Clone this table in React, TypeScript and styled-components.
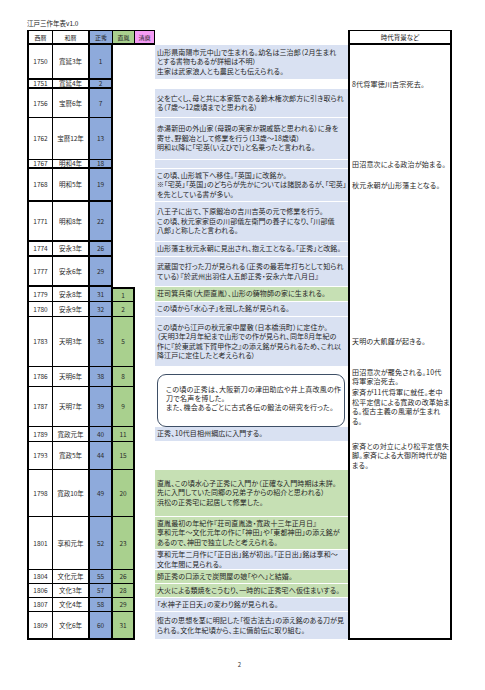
import { FC } from 'react';
import styled, { createGlobalStyle } from 'styled-components';

type Tone = 'blue' | 'green' | 'none';

interface Block {
  tone: Tone;
  lines: string[];
  h?: number;
}

interface Row {
  year: string;
  era: string;
  masa: string;
  nao?: string;
  h: number;
  thick?: boolean;
  events?: Block[];
  box?: string[];
  covered?: boolean;
  note?: string[];
}

const FILL = {
  blue: '#d9e1f2',
  green: '#c6e0b4',
  none: 'transparent',
};

const blue = (...lines: string[]): Block => ({ tone: 'blue', lines });
const green = (...lines: string[]): Block => ({ tone: 'green', lines });

const rows: Row[] = [
  {
    year: '1750', era: '寛延3年', masa: '1', h: 35, thick: true,
    events: [blue('山形県南陽市元中山で生まれる。幼名は三治郎（2月生まれ', 'とする書物もあるが詳細は不明）', '生家は武家浪人とも農民とも伝えられる。')],
  },
  { year: '1751', era: '寛延4年', masa: '2', h: 9, thick: true, note: ['8代将軍徳川吉宗死去。'] },
  {
    year: '1756', era: '宝暦6年', masa: '7', h: 29,
    events: [blue('父を亡くし、母と共に本家筋である鈴木権次郎方に引き取られ', 'る（7歳～12歳頃までと思われる）')],
  },
  {
    year: '1762', era: '宝暦12年', masa: '13', h: 42,
    events: [blue('赤湯新田の外山家（母親の実家か親戚筋と思われる）に身を', '寄せ、野鍛冶として修業を行う（13歳～18歳頃）', '明和以降に「宅英(いえひで)」と名乗ったと言われる。')],
  },
  { year: '1767', era: '明和4年', masa: '18', h: 9, thick: true, events: [blue()], note: ['田沼意次による政治が始まる。'] },
  {
    year: '1768', era: '明和5年', masa: '19', h: 33, thick: true,
    events: [blue('この頃、山形城下へ移住。「英国」に改銘か。', '※「宅英」「英国」のどちらが先かについては諸説あるが、「宅英」', 'を先としている書が多い。')],
    note: ['秋元永朝が山形藩主となる。'],
  },
  {
    year: '1771', era: '明和8年', masa: '22', h: 40, thick: true,
    events: [blue('八王子に出て、下原鍛冶の吉川吉英の元で修業を行う。', 'この頃、秋元家家臣の川部儀左衛門の養子になり、「川部儀', '八郎」と称したと言われる。')],
  },
  {
    year: '1774', era: '安永3年', masa: '26', h: 15, thick: true,
    events: [blue('山形藩主秋元永朝に見出され、抱え工となる。「正秀」と改銘。')],
  },
  {
    year: '1777', era: '安永6年', masa: '29', h: 30, thick: true,
    events: [blue('武蔵国で打った刀が見られる（正秀の最若年打ちとして知られ', 'ている）『於武州出羽住人五郎正秀・安永六年八月日』')],
  },
  {
    year: '1779', era: '安永8年', masa: '31', nao: '1', h: 15,
    events: [green('荘司箕兵衛（大慶直胤）、山形の鋳物師の家に生まれる。')],
  },
  {
    year: '1780', era: '安永9年', masa: '32', nao: '2', h: 15,
    events: [blue('この頃から「水心子」を冠した銘が見られる。')],
  },
  {
    year: '1783', era: '天明3年', masa: '35', nao: '5', h: 50,
    events: [blue('この頃から江戸の秋元家中屋敷（日本橋浜町）に定住か。', '（天明3年2月年紀まで山形での作が見られ、同年8月年紀の', '作に『於東武城下賀甲作之』の添え銘が見られるため、これ以', '降江戸に定住したと考えられる）')],
    note: ['天明の大飢饉が起きる。'],
  },
  {
    year: '1786', era: '天明6年', masa: '38', nao: '8', h: 20,
    box: ['この頃の正秀は、大阪新刀の津田助広や井上真改風の作', '刀で名声を博した。', 'また、機会あるごとに古式各伝の鍛法の研究を行った。'],
    note: ['田沼意次が罷免される。10代', '将軍家治死去。'],
  },
  {
    year: '1787', era: '天明7年', masa: '39', nao: '9', h: 40, covered: true,
    note: ['家斉が11代将軍に就任。老中', '松平定信による寛政の改革始ま', 'る。復古主義の風潮が生まれ', 'る。'],
  },
  {
    year: '1789', era: '寛政元年', masa: '40', nao: '11', h: 15,
    events: [blue('正秀、10代目相州綱広に入門する。')],
  },
  {
    year: '1793', era: '寛政5年', masa: '44', nao: '15', h: 28,
    note: ['家斉との対立により松平定信失', '脚。家斉による大御所時代が始', 'まる。'],
  },
  {
    year: '1798', era: '寛政10年', masa: '49', nao: '20', h: 47,
    events: [green('直胤、この頃水心子正秀に入門か（正確な入門時期は未詳。', '先に入門していた同郷の兄弟子からの紹介と思われる）', '浜松の正秀宅に起居して修業した。')],
  },
  {
    year: '1801', era: '享和元年', masa: '52', nao: '23', h: 53,
    events: [
      { ...green('直胤最初の年紀作『荘司直胤造・寛政十三年正月日』', '享和元年～文化元年の作に「神田」や「東都神田」の添え銘が', 'あるので、神田で独立したと考えられる。'), h: 32 },
      blue('享和元年二月作に「正日出」銘が初出。「正日出」銘は享和～', '文化年間に見られる。'),
    ],
  },
  {
    year: '1804', era: '文化元年', masa: '55', nao: '26', h: 14,
    events: [green('師正秀の口添えで炭問屋の娘「やへ」と結婚。')],
  },
  {
    year: '1806', era: '文化3年', masa: '57', nao: '28', h: 14,
    events: [green('大火による類焼をこうむり、一時的に正秀宅へ仮住まいする。')],
  },
  {
    year: '1807', era: '文化4年', masa: '58', nao: '29', h: 14,
    events: [blue('「水神子正日天」の変わり銘が見られる。')],
  },
  {
    year: '1809', era: '文化6年', masa: '60', nao: '31', h: 28, thick: true,
    events: [blue('復古の思想を茎に明記した「復古法古」の添え銘のある刀が見', 'られる。文化年紀頃から、主に備前伝に取り組む。')],
  },
];

const GlobalStyle = createGlobalStyle`
  html, body {
    margin: 0;
    background: #fff;
  }
  body {
    font-family: "Noto Sans CJK JP", "Noto Sans", sans-serif;
    font-feature-settings: "palt";
    color: #222;
  }
`;

const Page = styled.div`
  width: 485px;
  height: 690px;
  padding: 18px 0 0 27px;
  box-sizing: border-box;
`;

const Title = styled.div`
  font-size: 6.5px;
  line-height: 10px;
  height: 10px;
  margin-bottom: 2px;
`;

const Sheet = styled.div<{ $rows: string }>`
  display: grid;
  grid-template-columns: 26px 37px 23px 22px 20px 193px 104px;
  grid-template-rows: ${(p) => p.$rows};
  font-size: 6.5px;
  > div {
    box-sizing: border-box;
  }
`;

const HeadCell = styled.div<{ $bg?: string; $left?: number; $right?: number }>`
  display: flex;
  align-items: center;
  justify-content: center;
  background: ${(p) => p.$bg ?? '#fff'};
  border-top: 1px solid #000;
  border-bottom: 2px solid #000;
  border-left: ${(p) => p.$left ?? 0}px solid #000;
  border-right: ${(p) => p.$right ?? 1}px solid #000;
  font-size: 6px;
  white-space: nowrap;
`;

const HeadGap = styled.div``;

const Cell = styled.div<{ $thick?: boolean; $bg?: string; $left?: boolean; $right: number; $top?: boolean }>`
  display: flex;
  align-items: center;
  justify-content: center;
  white-space: nowrap;
  line-height: 7px;
  background: ${(p) => p.$bg ?? '#fff'};
  border-left: ${(p) => (p.$left ? '2px solid #000' : 'none')};
  border-right: ${(p) => p.$right}px solid #000;
  border-top: ${(p) => (p.$top ? '2px solid #000' : 'none')};
  border-bottom: ${(p) => (p.$thick ? 2 : 1)}px solid #000;
  color: #2a2a2a;
`;

const Blank = styled.div``;

const EventCell = styled.div`
  display: flex;
  flex-direction: column;
  min-width: 0;
`;

const EventPart = styled.div<{ $tone: Tone }>`
  flex: 1 1 auto;
  display: flex;
  flex-direction: column;
  justify-content: center;
  padding: 0 2px;
  overflow: hidden;
  background: ${(p) => FILL[p.$tone]};
  border-bottom: 1px solid #fff;
  font-size: 7px;
  line-height: 9.5px;
  letter-spacing: 0.1px;
  white-space: nowrap;
  color: #262626;
`;

const BoxWrap = styled.div<{ $span: number }>`
  grid-row: span ${(p) => p.$span};
  padding: 7px 3px 0 2px;
`;

const Bubble = styled.div`
  box-sizing: border-box;
  height: 100%;
  border: 1px solid #3e4f66;
  border-radius: 9px;
  display: flex;
  flex-direction: column;
  justify-content: center;
  padding: 0 0 5px 8px;
  font-size: 7px;
  line-height: 9px;
  letter-spacing: 0.25px;
  white-space: nowrap;
  color: #262626;
`;

const NoteHead = styled(HeadCell)`
  font-size: 6.5px;
`;

const NoteCell = styled.div<{ $last?: boolean }>`
  display: flex;
  flex-direction: column;
  justify-content: center;
  padding-left: 2px;
  border-left: 2px solid #000;
  border-right: 2px solid #000;
  border-bottom: ${(p) => (p.$last ? '2px solid #000' : 'none')};
  font-size: 7px;
  line-height: 9.5px;
  letter-spacing: 0.2px;
  white-space: nowrap;
  color: #262626;
`;

const PageNo = styled.div`
  width: 425px;
  margin-top: 20px;
  text-align: center;
  font-size: 6px;
  line-height: 10px;
  color: #333;
`;

const Lines: FC<{ lines: string[] }> = ({ lines }) => (
  <>
    {lines.map((l, i) => (
      <span key={i}>{l}</span>
    ))}
  </>
);

const TableRow: FC<{ row: Row; prev?: Row; last: boolean }> = ({ row, prev, last }) => (
  <>
    <Cell $left $right={1} $thick={row.thick}>{row.year}</Cell>
    <Cell $right={2} $thick={row.thick}>{row.era}</Cell>
    <Cell $right={2} $thick={row.thick} $bg="#8eaadb">{row.masa}</Cell>
    {row.nao ? (
      <Cell $right={2} $thick={row.thick} $bg="#a9d08e" $top={!prev?.nao}>
        {row.nao}
      </Cell>
    ) : (
      <Blank />
    )}
    <Blank />
    {row.box ? (
      <BoxWrap $span={2}>
        <Bubble>
          <Lines lines={row.box} />
        </Bubble>
      </BoxWrap>
    ) : row.covered ? null : (
      <EventCell>
        {(row.events ?? [{ tone: 'none', lines: [] }]).map((b, i) => (
          <EventPart key={i} $tone={b.tone} style={b.h ? { flex: `0 0 ${b.h}px` } : undefined}>
            <Lines lines={b.lines} />
          </EventPart>
        ))}
      </EventCell>
    )}
    <NoteCell $last={last}>
      <Lines lines={row.note ?? []} />
    </NoteCell>
  </>
);

const App: FC = () => {
  const template = ['15px', ...rows.map((r) => `${r.h}px`)].join(' ');
  return (
    <>
      <GlobalStyle />
      <Page>
        <Title>江戸三作年表v1.0</Title>
        <Sheet $rows={template}>
          <HeadCell $left={2}>西暦</HeadCell>
          <HeadCell $right={2}>和暦</HeadCell>
          <HeadCell $bg="#8eaadb">正秀</HeadCell>
          <HeadCell $bg="#a9d08e">直胤</HeadCell>
          <HeadCell $bg="#f59cf5">清麿</HeadCell>
          <HeadGap />
          <NoteHead $left={2} $right={2}>時代背景など</NoteHead>
          {rows.map((r, i) => (
            <TableRow key={r.year} row={r} prev={rows[i - 1]} last={i === rows.length - 1} />
          ))}
        </Sheet>
        <PageNo>2</PageNo>
      </Page>
    </>
  );
};

export default App;
